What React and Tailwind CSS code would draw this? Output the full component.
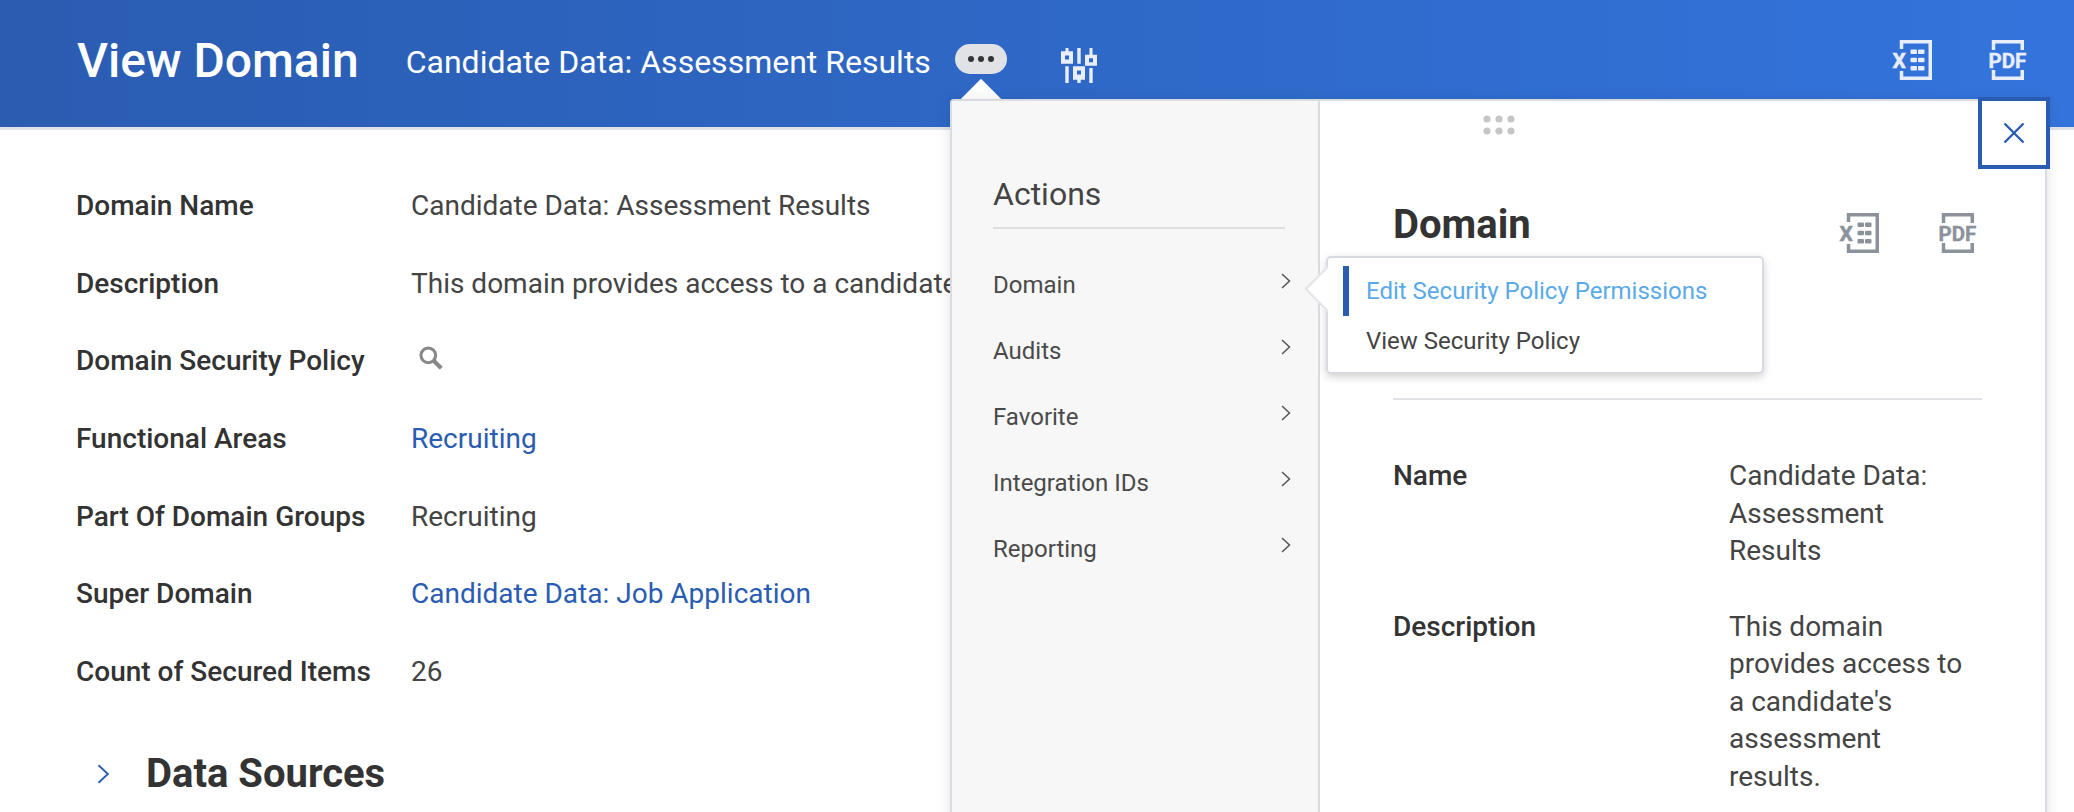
import React from "react";

const rows = [
  { label: "Domain Name", value: "Candidate Data: Assessment Results" },
  { label: "Description", value: "This domain provides access to a candidate's assessment results." },
  { label: "Domain Security Policy", search: true },
  { label: "Functional Areas", value: "Recruiting", link: true },
  { label: "Part Of Domain Groups", value: "Recruiting" },
  { label: "Super Domain", value: "Candidate Data: Job Application", link: true },
  { label: "Count of Secured Items", value: "26" },
];

const actions = ["Domain", "Audits", "Favorite", "Integration IDs", "Reporting"];

const Chevron = ({ className }) => (
  <svg viewBox="0 0 10 16" fill="none" stroke="currentColor" strokeWidth="1.5" className={className}>
    <path d="M1 1l7.5 7L1 15" />
  </svg>
);

const SlidersIcon = () => (
  <svg width="36" height="36" viewBox="0 0 36 36" fill="#e8eefb" fillRule="evenodd">
    <path d="M4.500 0h3v3.300H12v12.400H0V3.300h4.500zM4 7.500v4h4v-4zM4.300 18.300h3.400V35H4.300z" />
    <path d="M16.300 0h3.400v15.700h-3.400zM12 18.300h12v13.400h-4.300V35h-3.400v-3.300H12zM16 22.500v4h4v-4z" />
    <path d="M28.500 0h3v6.700H36v11H24v-11h4.500zM28 10.300v4h4v-4zM28.300 20h3.400v15h-3.400z" />
  </svg>
);

const ExcelIcon = ({ color }) => (
  <svg width="40" height="40" viewBox="0 0 40 40" fill={color}>
    <path d="M9.500 9V1.750h28.750v36.500H9.500V31" fill="none" stroke={color} strokeWidth="3.500" />
    <rect x="18.500" y="9.500" width="6.500" height="4.500" rx="1" />
    <rect x="26" y="9.500" width="6.500" height="4.500" rx="1" />
    <rect x="18.500" y="17.700" width="6.500" height="4.500" rx="1" />
    <rect x="26" y="17.700" width="6.500" height="4.500" rx="1" />
    <rect x="18.500" y="26" width="6.500" height="4.500" rx="1" />
    <rect x="26" y="26" width="6.500" height="4.500" rx="1" />
    <text x="0.500" y="28" fontFamily="Roboto" fontWeight="700" fontSize="21" stroke={color} strokeWidth="0.500">X</text>
  </svg>
);

const PdfIcon = ({ color }) => (
  <svg width="37" height="40" viewBox="0 0 37 40" fill={color} className="overflow-visible">
    <path d="M4.500 10V1.750h28.750V10M4.500 30v8.250h28.750V30" fill="none" stroke={color} strokeWidth="3.500" />
    <text x="-0.500" y="27.500" fontFamily="Roboto" fontWeight="700" fontSize="20.500" stroke={color} strokeWidth="0.400">PDF</text>
  </svg>
);

export default function App() {
  return (
    <div className="relative h-[812px] w-full overflow-hidden bg-white font-[Roboto,sans-serif] text-[#333]">
      {/* header */}
      <header className="flex h-[130px] items-start border-b-[3px] border-[#dfe2e7] bg-gradient-to-r from-[#2a5cb1] to-[#3374dc] pl-[77px] pr-[48px] text-white">
        <h1 className="mt-[33px] text-[48px] leading-[56px] font-medium">View Domain</h1>
        <span className="mt-[43px] ml-[47px] text-[32px] leading-[38px]">Candidate Data: Assessment Results</span>
        <button className="mt-[44px] ml-[24px] flex h-[30px] w-[52px] items-center justify-center gap-[4px] rounded-[15px] bg-[#e0e2e6]">
          <i className="h-[6px] w-[6px] rounded-full bg-[#333]" />
          <i className="h-[6px] w-[6px] rounded-full bg-[#333]" />
          <i className="h-[6px] w-[6px] rounded-full bg-[#333]" />
        </button>
        <div className="mt-[48px] ml-[54px]">
          <SlidersIcon />
        </div>
        <div className="mt-[40px] ml-auto flex gap-[57px]">
          <ExcelIcon color="#e8eefb" />
          <PdfIcon color="#e8eefb" />
        </div>
      </header>

      {/* details */}
      <main className="pt-[37px] pl-[76px]">
        {rows.map((row) => (
          <div key={row.label} className="flex h-[77.7px] items-center text-[28px] whitespace-nowrap">
            <span className="w-[335px] font-medium text-[#333]">{row.label}</span>
            {row.search ? (
              <svg width="26" height="26" viewBox="0 0 24 24" fill="none" stroke="#888" className="ml-[7px] -mt-[6px]">
                <circle cx="9.500" cy="9.500" r="6.800" strokeWidth="2.800" />
                <path d="M14.500 14.500l7 7" strokeWidth="3.800" />
              </svg>
            ) : (
              <span className={row.link ? "text-[#2a5cb1]" : "text-[#444]"}>{row.value}</span>
            )}
          </div>
        ))}
        <div className="mt-[40px] flex items-center">
          <Chevron className="ml-[21px] h-[20px] w-[13px] text-[#2a5cb1]" />
          <h2 className="ml-[36px] text-[40px] leading-[46px] font-bold">Data Sources</h2>
        </div>
      </main>

      {/* pointer under the dots button */}
      <div className="absolute top-[85px] left-[966px] h-[30px] w-[30px] rotate-45 bg-white" />

      {/* actions panel */}
      <div className="absolute top-[99px] left-[950px] flex h-[760px] w-[1097px] rounded-t-[4px] border-2 border-[#d8dbe0] bg-white shadow-[0_2px_14px_rgba(0,0,0,0.12)]">
        <aside className="w-[368px] shrink-0 border-r-2 border-[#dcdcdc] bg-[#f7f7f7] pt-[73px] pr-[33px] pl-[41px]">
          <h3 className="border-b-2 border-[#dfdfdf] pb-[13px] text-[32px] leading-[40px] text-[#444]">Actions</h3>
          <ul className="mt-[23px]">
            {actions.map((a) => (
              <li key={a} className="flex h-[66px] items-center justify-between text-[24px] text-[#4a4a4a]">
                {a}
                <Chevron className="-mr-[6px] mb-[8px] h-[16px] w-[10px] text-[#555]" />
              </li>
            ))}
          </ul>
        </aside>

        <section className="flex-1 pt-[100px] pr-[63px] pl-[73px]">
          <div className="flex h-[199px] items-start justify-between border-b-2 border-[#e0e2e5] pr-[6px]">
            <h2 className="text-[40px] leading-[48px] font-bold">Domain</h2>
            <div className="mt-[12px] flex gap-[60px]">
              <ExcelIcon color="#8b929b" />
              <PdfIcon color="#8b929b" />
            </div>
          </div>
          <div className="mt-[57px] flex text-[28px] leading-[37.5px]">
            <span className="w-[336px] shrink-0 font-medium">Name</span>
            <span className="w-[236px] text-[#444]">Candidate Data: Assessment Results</span>
          </div>
          <div className="mt-[38px] flex text-[28px] leading-[37.5px]">
            <span className="w-[336px] shrink-0 font-medium">Description</span>
            <span className="w-[236px] text-[#444]">This domain provides access to a candidate's assessment results.</span>
          </div>
        </section>

        {/* drag handle */}
        <svg width="32" height="20" viewBox="0 0 32 20" fill="#c6c6c6" className="absolute top-[14px] left-1/2 -translate-x-1/2">
          <circle cx="4" cy="4" r="3.600" />
          <circle cx="16" cy="4" r="3.600" />
          <circle cx="28" cy="4" r="3.600" />
          <circle cx="4" cy="16" r="3.600" />
          <circle cx="16" cy="16" r="3.600" />
          <circle cx="28" cy="16" r="3.600" />
        </svg>

        {/* submenu */}
        <div className="absolute top-[155px] left-[374px] h-[118px] w-[438px] rounded-[5px] border-2 border-[#d7dae0] bg-white shadow-[0_3px_8px_rgba(0,0,0,0.18)]">
          <div className="absolute top-[15px] -left-[17px] h-[32px] w-[32px] rotate-45 border-b-2 border-l-2 border-[#e2e4e8] bg-white" />
          <div className="relative flex h-full flex-col pt-[8px] pl-[15px] text-[24px]">
            <div className="flex h-[50px] items-center border-l-[6px] border-[#2a5cb1] pl-[17px] text-[#5aaae8]">
              Edit Security Policy Permissions
            </div>
            <div className="flex h-[50px] items-center pl-[23px] text-[#444]">View Security Policy</div>
          </div>
        </div>

        {/* close */}
        <button className="absolute -top-[4px] -right-[5px] flex h-[72px] w-[72px] items-center justify-center border-4 border-[#2a5cb1] bg-white">
          <svg width="22" height="22" viewBox="0 0 22 22" stroke="#2a5cb1" strokeWidth="2.400" fill="none">
            <path d="M1.500 1.500l19 19M20.500 1.500l-19 19" />
          </svg>
        </button>
      </div>
    </div>
  );
}
